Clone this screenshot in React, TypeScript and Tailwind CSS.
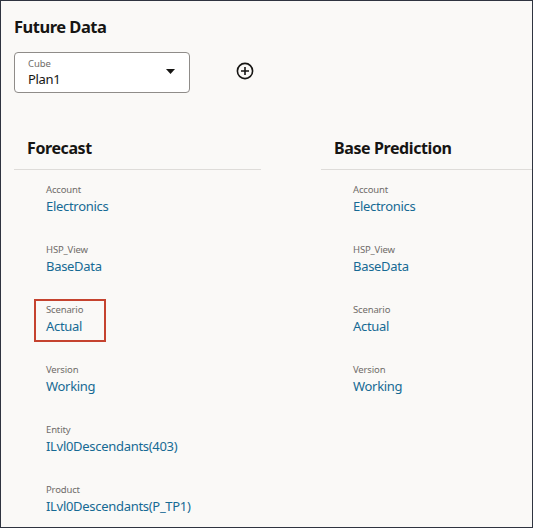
import React from "react";

const items = [
  { label: "Account", value: "Electronics" },
  { label: "HSP_View", value: "BaseData" },
  { label: "Scenario", value: "Actual" },
  { label: "Version", value: "Working" },
  { label: "Entity", value: "ILvl0Descendants(403)" },
  { label: "Product", value: "ILvl0Descendants(P_TP1)" },
];

function Column({ title, highlight, count }: { title: string; highlight?: boolean; count: number }) {
  return (
    <div className="w-[247px] shrink-0">
      <div className="pl-[13px] h-[34px] flex items-start border-b border-[#dedcd9]">
        <h2 className="text-[16px] leading-[24px] font-bold tracking-[-0.4px] text-[#161513]">{title}</h2>
      </div>
      <div className="pl-[32px] pt-[13px] flex flex-col gap-[27px]">
        {items.slice(0, count).map((it) => (
          <div key={it.label} className="relative flex flex-col">
            {highlight && it.label === "Scenario" && (
              <span className="absolute left-[-12px] top-[-4px] w-[72px] h-[43px] border-2 border-[#c5432f]" />
            )}
            <span className="text-[9.5px] leading-[13px] tracking-[-0.15px] text-[#6f6c69]">{it.label}</span>
            <span className="text-[13px] leading-[20px] tracking-[-0.3px] text-[#166a94] whitespace-nowrap">{it.value}</span>
          </div>
        ))}
      </div>
    </div>
  );
}

export default function App() {
  return (
    <div
      className="w-[533px] h-[528px] overflow-hidden border border-[#2f3440] bg-[#faf9f7] text-[#161513]"
      style={{ fontFamily: '"Noto Sans", "Open Sans", sans-serif' }}
    >
      <div className="pl-[13px] pt-[14px]">
        <h1 className="text-[16.5px] leading-[24px] font-bold tracking-[-0.5px]">Future Data</h1>
        <div className="mt-[13px] flex items-center">
          <div className="w-[176px] h-[41px] rounded-[4px] border border-[#8f8c89] bg-white flex items-center pl-[13px] pr-[14px]">
            <div className="flex-1 flex flex-col">
              <span className="text-[9.5px] leading-[12px] tracking-[-0.1px] text-[#6f6c69]">Cube</span>
              <span className="text-[13px] leading-[18px] tracking-[-0.3px] text-[#161513]">Plan1</span>
            </div>
            <svg width="9" height="5" viewBox="0 0 9 5" className="-mt-[2px]">
              <path d="M0 0 L9 0 L4.5 5 Z" fill="#161513" />
            </svg>
          </div>
          <svg className="ml-[46px] -mt-[3px]" width="18" height="18" viewBox="0 0 18 18">
            <circle cx="9" cy="9" r="7.6" fill="none" stroke="#161513" strokeWidth="1.6" />
            <path d="M9 5 V13 M5 9 H13" stroke="#161513" strokeWidth="1.6" />
          </svg>
        </div>
        <div className="mt-[43px] flex gap-[60px]">
          <Column title="Forecast" highlight count={6} />
          <Column title="Base Prediction" count={4} />
        </div>
      </div>
    </div>
  );
}
